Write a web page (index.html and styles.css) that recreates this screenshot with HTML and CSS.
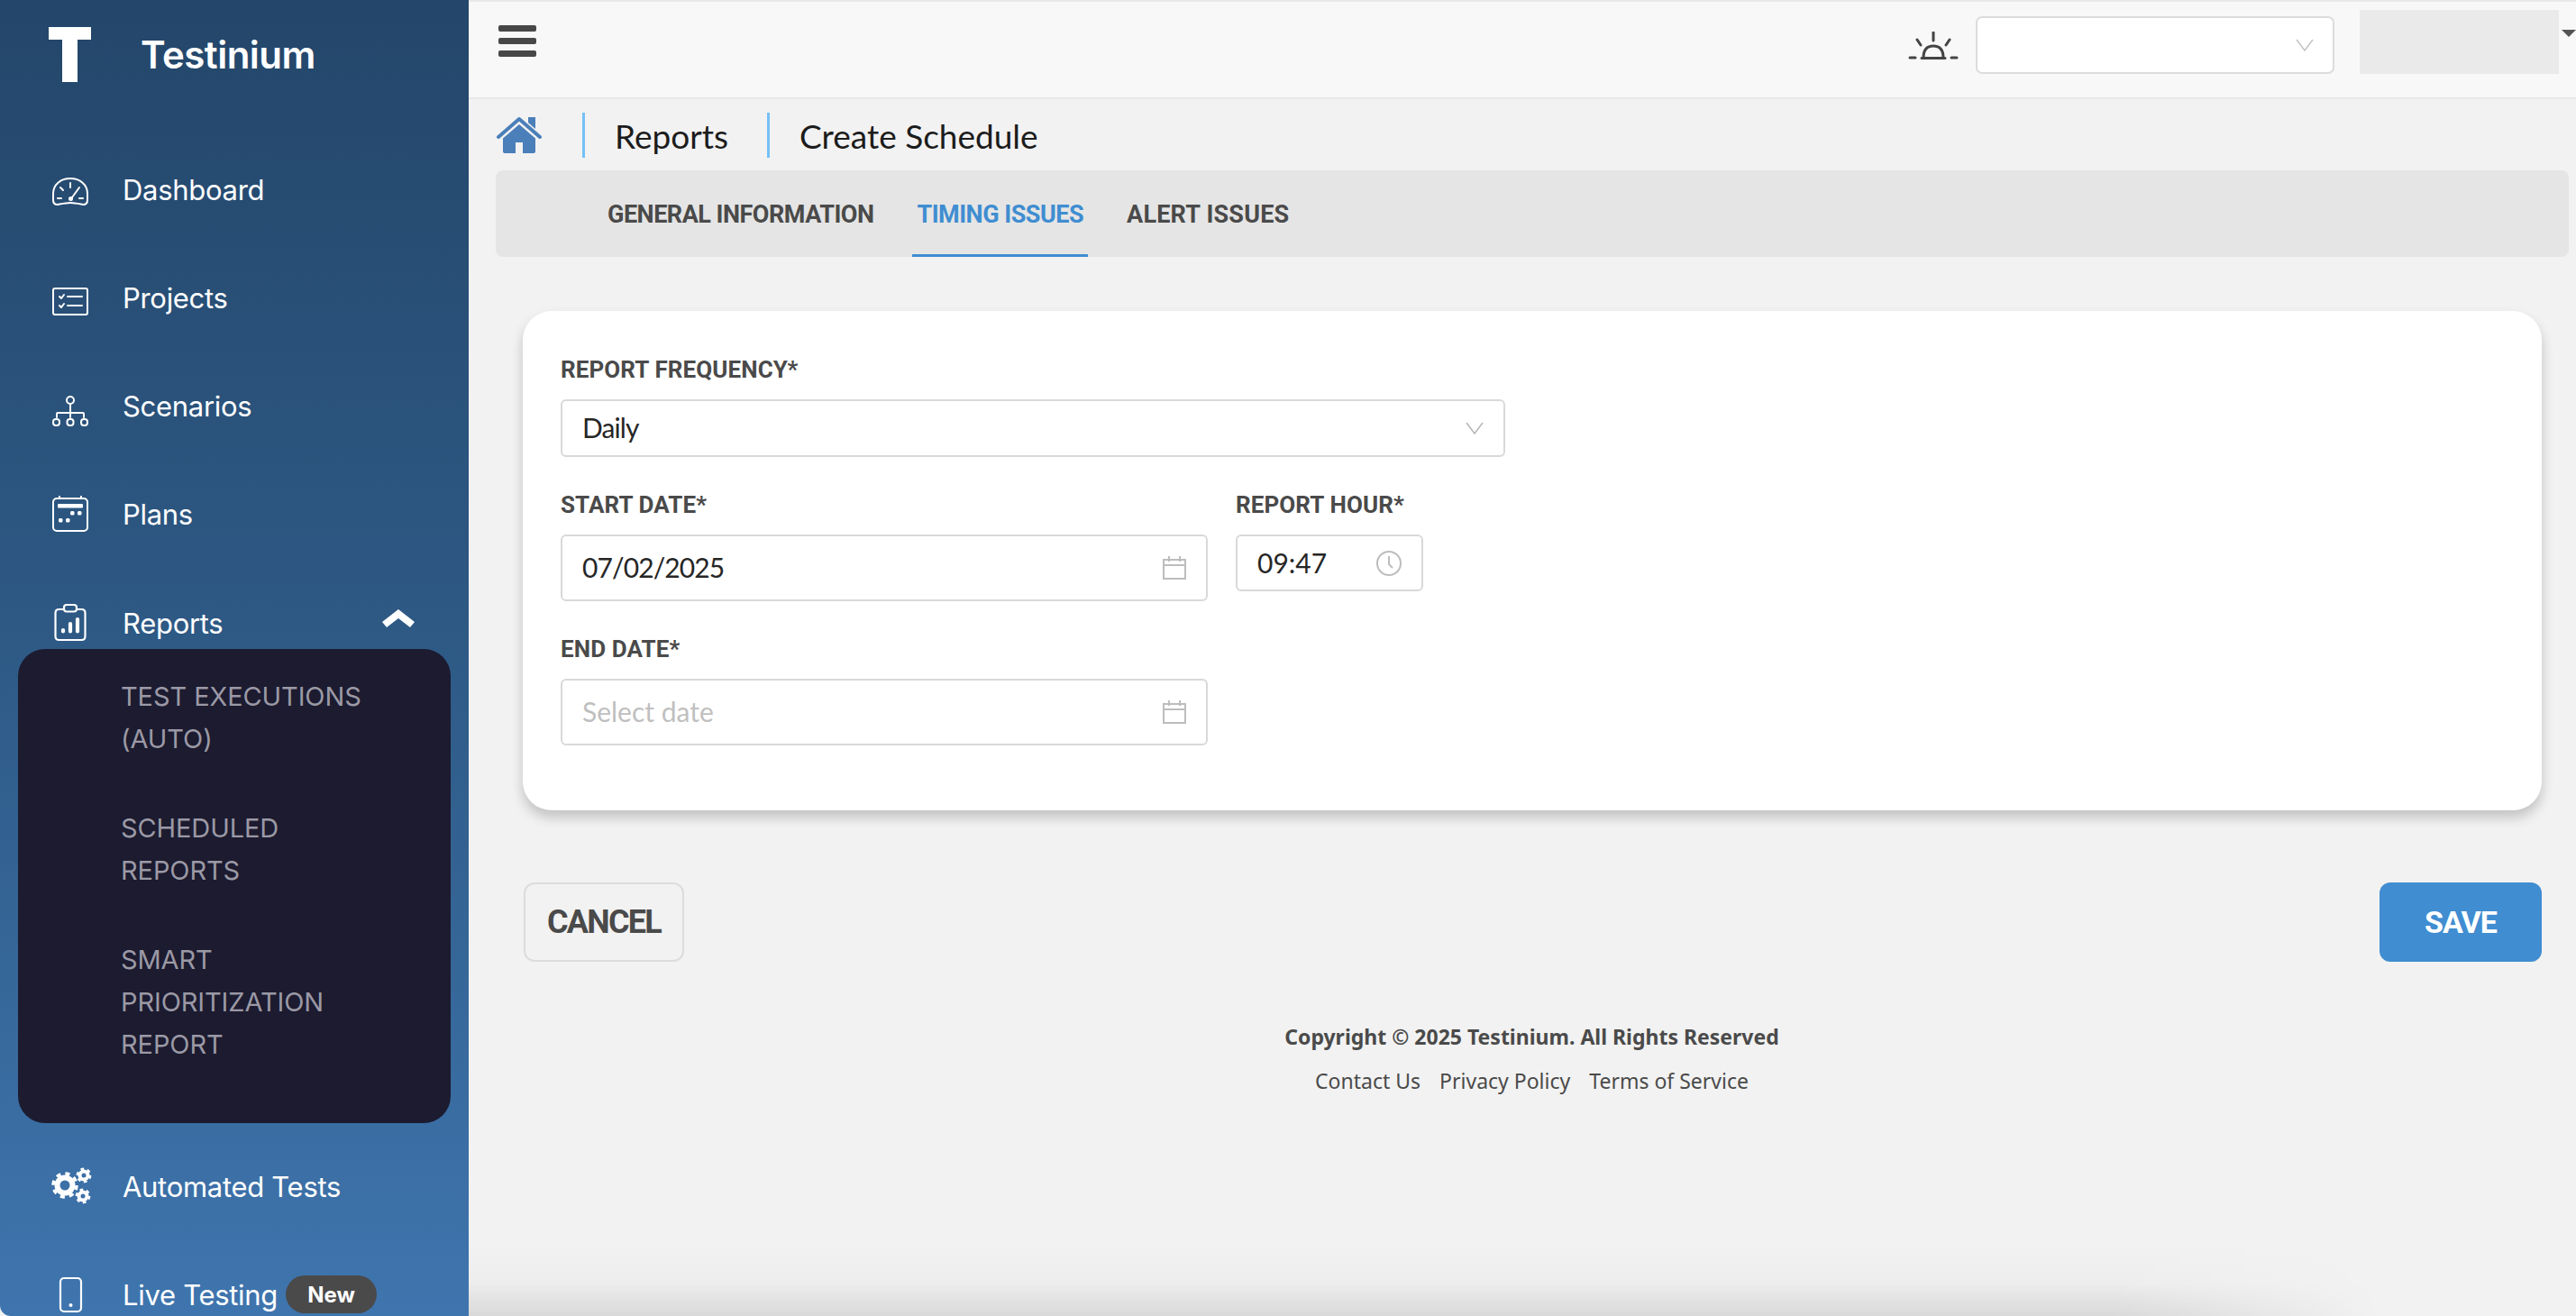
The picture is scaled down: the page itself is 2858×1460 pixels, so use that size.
FILE: index.html
```html
<!DOCTYPE html>
<html lang="en">
<head>
	<title>Testinium - Create Schedule</title>
	<meta charset="utf-8">
	<link rel="stylesheet" href="styles.css">
</head>
<body>
<div class="app">

	<aside class="sidebar">
		<div class="brand">
			<svg class="brand-mark" viewBox="0 0 47 61"><path d="M0 0H47V14H32V61H15V14H0Z" fill="#fff"/></svg>
			<span class="brand-name">Testinium</span>
		</div>

		<nav class="nav">
			<a class="nav-row">
				<svg class="nav-icon" viewBox="0 -3 40 40" fill="none" stroke="#fff" stroke-width="2" stroke-linecap="round" stroke-linejoin="round"><path d="M6 34c-3 0-5-2-5-5v-7C1 12 9 5 20 5s19 7 19 17v7c0 3-2 5-5 5-5-1-9-2-14-2s-9 1-14 2Z"/><path d="M20 10v5M9 15l3 3M6 27h4M30 27h4M30 15l-8 11" /><circle cx="20.500" cy="27.500" r="1.500" fill="#fff"/></svg>
				<span>Dashboard</span>
			</a>
			<a class="nav-row">
				<svg class="nav-icon" viewBox="0 -5 40 40" fill="none" stroke="#fff" stroke-width="2" stroke-linecap="round" stroke-linejoin="round"><rect x="1" y="5" width="38" height="29" rx="2"/><path d="M8 14l2 2 3-4M8 24l2 2 3-4M17 14h16M17 24h16"/></svg>
				<span>Projects</span>
			</a>
			<a class="nav-row">
				<svg class="nav-icon" viewBox="0 -6 40 40" fill="none" stroke="#fff" stroke-width="2" stroke-linecap="round" stroke-linejoin="round"><circle cx="20" cy="8" r="4"/><path d="M20 12v15M5 27v-4q0-1 1-1h28q1 0 1 1v4"/><rect x="1" y="29" width="7" height="7" rx="3"/><rect x="16.500" y="29" width="7" height="7" rx="3"/><rect x="32" y="29" width="7" height="7" rx="3"/></svg>
				<span>Scenarios</span>
			</a>
			<a class="nav-row">
				<svg class="nav-icon" viewBox="0 0 40 40" fill="none" stroke="#fff" stroke-width="2"><rect x="1" y="3" width="38" height="36" rx="4"/><path d="M8 3V0M32 3V0"/><rect x="6" y="9" width="28" height="4.500" rx="1" fill="#fff" stroke="none"/><g fill="#fff" stroke="none"><rect x="20" y="17" width="4.500" height="4.500" rx="1.500"/><rect x="28" y="17" width="4.500" height="4.500" rx="1.500"/><rect x="7" y="25" width="4.500" height="4.500" rx="1.500"/><rect x="15" y="25" width="4.500" height="4.500" rx="1.500"/></g></svg>
				<span>Plans</span>
			</a>
			<a class="nav-row nav-row-open">
				<svg class="nav-icon" viewBox="0 0 40 40" fill="none" stroke="#fff" stroke-width="2.200" stroke-linecap="round" stroke-linejoin="round"><path d="M12 5H7.500q-4 0-4 4v26q0 4 4 4h25q4 0 4-4V9q0-4-4-4H28"/><rect x="13" y="0" width="14" height="7.500" rx="3"/><path d="M12 28v1.500M20 21v8.500M28 16v13.500" stroke-width="4.200"/></svg>
				<span>Reports</span>
				<svg class="nav-chevron" viewBox="0 0 36 24"><path d="M18 0L36 14 31 20 18 10 5 20 0 14Z" fill="#fff"/></svg>
			</a>
			<div class="submenu">
				<a class="submenu-item">TEST EXECUTIONS (AUTO)</a>
				<a class="submenu-item">SCHEDULED REPORTS</a>
				<a class="submenu-item">SMART PRIORITIZATION REPORT</a>
			</div>
			<a class="nav-row nav-row-after">
				<svg class="nav-icon nav-icon-wide" viewBox="0 0 44 40" fill="none" stroke="#fff">
					<circle cx="14" cy="19" r="8.500" stroke-width="6"/>
					<circle cx="14" cy="19" r="13" stroke-width="3.500" stroke-dasharray="5.100 5.110"/>
					<circle cx="35" cy="8" r="4.500" stroke-width="4"/>
					<circle cx="35" cy="8" r="7.200" stroke-width="2.400" stroke-dasharray="3.770 3.770"/>
					<circle cx="34" cy="31" r="4.500" stroke-width="4"/>
					<circle cx="34" cy="31" r="7.200" stroke-width="2.400" stroke-dasharray="3.770 3.770"/>
				</svg>
				<span>Automated Tests</span>
			</a>
			<a class="nav-row nav-row-live">
				<svg class="nav-icon" viewBox="0 0 40 40" fill="none" stroke="#fff" stroke-width="2.200"><rect x="9" y="2" width="23" height="37" rx="4"/><circle cx="20.500" cy="32" r="2" fill="#fff" stroke="none"/></svg>
				<span>Live Testing</span>
				<span class="badge-new">New</span>
			</a>
		</nav>
	</aside>

	<main class="main">
		<header class="topbar">
			<div class="hamburger"><i></i><i></i><i></i></div>
			<div class="topbar-right">
				<svg class="alarm" viewBox="0 0 56 32" fill="none" stroke="#444" stroke-width="3" stroke-linecap="round"><path d="M28 1v9M10 9l4 6M46 9l-4 6M2 29h6M48 29h6"/><path d="M15 29.500h26M17 29c0-9 4-13 11-13s11 4 11 13"/></svg>
				<div class="top-select">
					<svg class="chevron" viewBox="0 0 20 14"><path d="M1 1l9 12 9-12" fill="none" stroke="#c4c4c4" stroke-width="1.500"/></svg>
				</div>
				<div class="user-box"></div>
				<div class="user-caret"></div>
			</div>
		</header>

		<div class="crumbs">
			<svg class="home" viewBox="0 0 50 40"><path d="M2 22L25 2 48 22" fill="none" stroke="#4a7fb9" stroke-width="4" stroke-linecap="round" stroke-linejoin="round"/><path d="M35 0h8v13l-8-7Z" fill="#4a7fb9"/><path d="M7 23.500L25 8 43 23.500V38q0 2-2 2H29V28H21V40H9q-2 0-2-2Z" fill="#4a7fb9"/></svg>
			<span class="crumb">Reports</span>
			<span class="crumb">Create Schedule</span>
		</div>

		<div class="tabs">
			<a class="tab">GENERAL INFORMATION</a>
			<a class="tab tab-active">TIMING ISSUES</a>
			<a class="tab tab-last">ALERT ISSUES</a>
		</div>

		<section class="card">
			<div class="field field-wide">
				<label class="field-label">REPORT FREQUENCY*</label>
				<div class="control control-select">
					<span class="value-tight">Daily</span>
					<svg class="chevron" viewBox="0 0 20 14"><path d="M1 1l9 12 9-12" fill="none" stroke="#b5b5b5" stroke-width="1.500"/></svg>
				</div>
			</div>
			<div class="field-row">
				<div class="field field-date">
					<label class="field-label">START DATE*</label>
					<div class="control control-date">
						<span class="value-tight">07/02/2025</span>
						<svg class="cal" viewBox="0 0 26 26" fill="none" stroke="#bdbdbd" stroke-width="2"><rect x="1" y="4" width="24" height="21"/><path d="M1 10h24M7 0v6M19 0v6"/></svg>
					</div>
				</div>
				<div class="field field-hour">
					<label class="field-label">REPORT HOUR*</label>
					<div class="control control-hour">
						<span>09:47</span>
						<svg class="clock" viewBox="0 0 28 28" fill="none" stroke="#bdbdbd" stroke-width="2"><circle cx="14" cy="14" r="13"/><path d="M14 6v9l4 4"/></svg>
					</div>
				</div>
			</div>
			<div class="field field-date">
				<label class="field-label">END DATE*</label>
				<div class="control control-date control-empty">
					<span>Select date</span>
					<svg class="cal" viewBox="0 0 26 26" fill="none" stroke="#bdbdbd" stroke-width="2"><rect x="1" y="4" width="24" height="21"/><path d="M1 10h24M7 0v6M19 0v6"/></svg>
				</div>
			</div>
		</section>

		<div class="actions">
			<button class="btn btn-cancel">CANCEL</button>
			<button class="btn btn-save">SAVE</button>
		</div>

		<footer class="footer">
			<div class="copyright">Copyright © 2025 Testinium. All Rights Reserved</div>
			<div class="footer-links">
				<a>Contact Us</a>
				<a>Privacy Policy</a>
				<a>Terms of Service</a>
			</div>
		</footer>
	</main>

</div>
</body>
</html>
```

FILE: styles.css
```css
* {
	box-sizing: border-box;
}

html, body {
	margin: 0;
	height: 100%;
	overflow: hidden;
	background: #f2f2f2;
}

body {
	font-family: "Inter", sans-serif;
}

.app {
	display: flex;
	height: 1460px;
}

/* sidebar */

.sidebar {
	width: 520px;
	flex: none;
	height: 1460px;
	overflow: hidden;
	color: #fff;
	background: linear-gradient(180deg, #24466a 0%, #2e5a86 50%, #3f75ae 100%);
	border-bottom-left-radius: 12px;
}

.brand {
	display: flex;
	height: 180px;
	padding: 30px 0 0 54px;
	align-items: flex-start;
}

.brand-mark {
	width: 47px;
	height: 61px;
}

.brand-name {
	margin: 4px 0 0 55px;
	font-size: 42px;
	font-weight: 600;
	line-height: 54px;
	letter-spacing: -0.5px;
}

.nav {
	display: flex;
	flex-direction: column;
}

.nav-row {
	display: flex;
	align-items: center;
	height: 60px;
	margin-bottom: 60px;
	padding-left: 58px;
	font-size: 31px;
	letter-spacing: -0.3px;
}

.nav-icon {
	width: 40px;
	height: 40px;
	margin-right: 38px;
	flex: none;
	overflow: visible;
}

.nav-icon-wide {
	width: 44px;
	margin-right: 34px;
}

.nav-row-open {
	position: relative;
	height: 60px;
	margin-top: 1px;
	margin-bottom: 0;
}

.nav-chevron {
	width: 36px;
	height: 24px;
	margin: -6px 0 0 177px;
}

.submenu {
	width: 480px;
	height: 526px;
	margin: -1px 0 40px 20px;
	padding: 29px 60px 0 114px;
	border-radius: 30px;
	background: #1c1b30;
}

.submenu-item {
	display: block;
	margin-bottom: 52px;
	font-size: 29px;
	font-weight: 400;
	line-height: 47px;
	letter-spacing: -0.1px;
	color: #9b99a5;
}

.nav-row-live {
	margin-bottom: 0;
}

.badge-new {
	display: flex;
	align-items: center;
	justify-content: center;
	width: 101px;
	height: 42px;
	margin-left: 9px;
	border-radius: 21px;
	background: #4a4a4a;
	font-size: 24px;
	font-weight: 700;
	letter-spacing: 0;
}

/* main column */

.main {
	position: relative;
	flex: 1;
	min-width: 0;
	display: flex;
	flex-direction: column;
}

.main::after {
	content: "";
	position: absolute;
	left: 0;
	width: 2120px;
	bottom: 0;
	height: 80px;
	background: linear-gradient(180deg, rgba(0, 0, 0, 0) 0%, rgba(0, 0, 0, 0.02) 55%, rgba(0, 0, 0, 0.1) 100%);
	-webkit-mask-image: linear-gradient(90deg, #000 86%, transparent 100%);
	mask-image: linear-gradient(90deg, #000 86%, transparent 100%);
}

.topbar {
	display: flex;
	justify-content: space-between;
	height: 110px;
	padding-left: 33px;
	background: #f8f8f8;
	border-top: 2px solid #e8e8e8;
	border-bottom: 2px solid #e8e8e8;
}

.hamburger {
	display: flex;
	flex-direction: column;
	gap: 7px;
	width: 42px;
	margin-top: 26px;
}

.hamburger i {
	display: block;
	height: 7px;
	border-radius: 2px;
	background: #474747;
}

.topbar-right {
	display: flex;
	align-items: flex-start;
}

.alarm {
	width: 56px;
	height: 32px;
	margin: 33px 19px 0 0;
}

.top-select {
	display: flex;
	align-items: center;
	justify-content: flex-end;
	width: 398px;
	height: 64px;
	margin: 16px 28px 0 0;
	padding-right: 21px;
	background: #fff;
	border: 2px solid #dcdcdc;
	border-radius: 7px;
}

.user-box {
	width: 221px;
	height: 71px;
	margin-top: 9px;
	background: #eaeaea;
}

.user-caret {
	width: 0;
	height: 0;
	margin: 31px 0 0 3px;
	border-left: 8px solid transparent;
	border-right: 8px solid transparent;
	border-top: 8px solid #555;
}

.crumbs {
	display: flex;
	align-items: center;
	height: 50px;
	margin: 15px 0 14px 31px;
}

.home {
	width: 50px;
	height: 40px;
	margin-right: 45px;
}

.crumb {
	display: flex;
	align-items: center;
	height: 50px;
	padding: 0 43px 0 33px;
	border-left: 3px solid #75c1f6;
	font-family: "Lato", sans-serif;
	font-size: 37px;
	color: #1c1c1c;
}

.tabs {
	display: flex;
	height: 96px;
	margin: 0 8px 0 30px;
	padding-left: 119px;
	background: #e5e5e5;
	border-radius: 8px;
}

.tab {
	display: flex;
	height: 96px;
	padding: 32px 5px 0;
	margin-right: 38px;
	font-family: "Roboto", sans-serif;
	font-size: 27px;
	font-weight: 700;
	line-height: 34px;
	letter-spacing: -0.5px;
	color: #4a4a4a;
	border-bottom: 3px solid transparent;
}

.tab-active {
	color: #3f8dd1;
	border-bottom-color: #3f8dd1;
}

.tab-last {
	letter-spacing: 0.2px;
}

.card {
	height: 554px;
	margin: 60px 38px 0 60px;
	padding: 48px 42px 0;
	background: #fff;
	border-radius: 32px;
	box-shadow: 0 8px 14px rgba(0, 0, 0, 0.2);
}

.field-label {
	display: block;
	height: 50px;
	font-family: "Roboto", sans-serif;
	font-size: 26px;
	font-weight: 700;
	line-height: 34px;
	letter-spacing: 0.1px;
	color: #4a4a4a;
}

.field-wide {
	width: 1048px;
	margin-bottom: 36px;
}

.field-row {
	display: flex;
	gap: 31px;
	margin-bottom: 36px;
}

.field-date {
	width: 718px;
}

.field-hour {
	width: 208px;
}

.control {
	display: flex;
	align-items: center;
	justify-content: space-between;
	background: #fff;
	border: 2px solid #d9d9d9;
	border-radius: 6px;
	padding: 0 22px;
	font-family: "Lato", sans-serif;
	font-size: 30px;
	color: #262626;
}

.control > span {
	padding-bottom: 2px;
}

.value-tight {
	letter-spacing: -0.9px;
}

.control-select {
	height: 64px;
}

.control-date {
	height: 74px;
}

.control-hour {
	height: 63px;
}

.control-empty {
	color: #bfbfbf;
}

.chevron {
	width: 20px;
	height: 14px;
}

.cal {
	width: 26px;
	height: 26px;
}

.clock {
	width: 28px;
	height: 28px;
}

.actions {
	display: flex;
	justify-content: space-between;
	margin: 80px 38px 0 61px;
}

.btn {
	width: 180px;
	height: 88px;
	border-radius: 12px;
	font-family: "Roboto", sans-serif;
	font-size: 36px;
	font-weight: 700;
}

.btn-cancel {
	width: 178px;
	background: transparent;
	border: 2px solid #dcdcdc;
	color: #4a4a4a;
	letter-spacing: -1.7px;
}

.btn-save {
	background: #408dd1;
	border: 0;
	color: #fff;
	font-size: 34px;
	letter-spacing: -1px;
}

.footer {
	margin-top: 66px;
	margin-left: 21px;
	text-align: center;
	font-family: "Noto Sans", sans-serif;
	color: #4a4a4a;
}

.copyright {
	font-size: 23px;
	font-weight: 700;
	line-height: 34px;
}

.footer-links {
	display: flex;
	justify-content: center;
	gap: 21px;
	margin-top: 15px;
	font-size: 23px;
	line-height: 34px;
}
```
